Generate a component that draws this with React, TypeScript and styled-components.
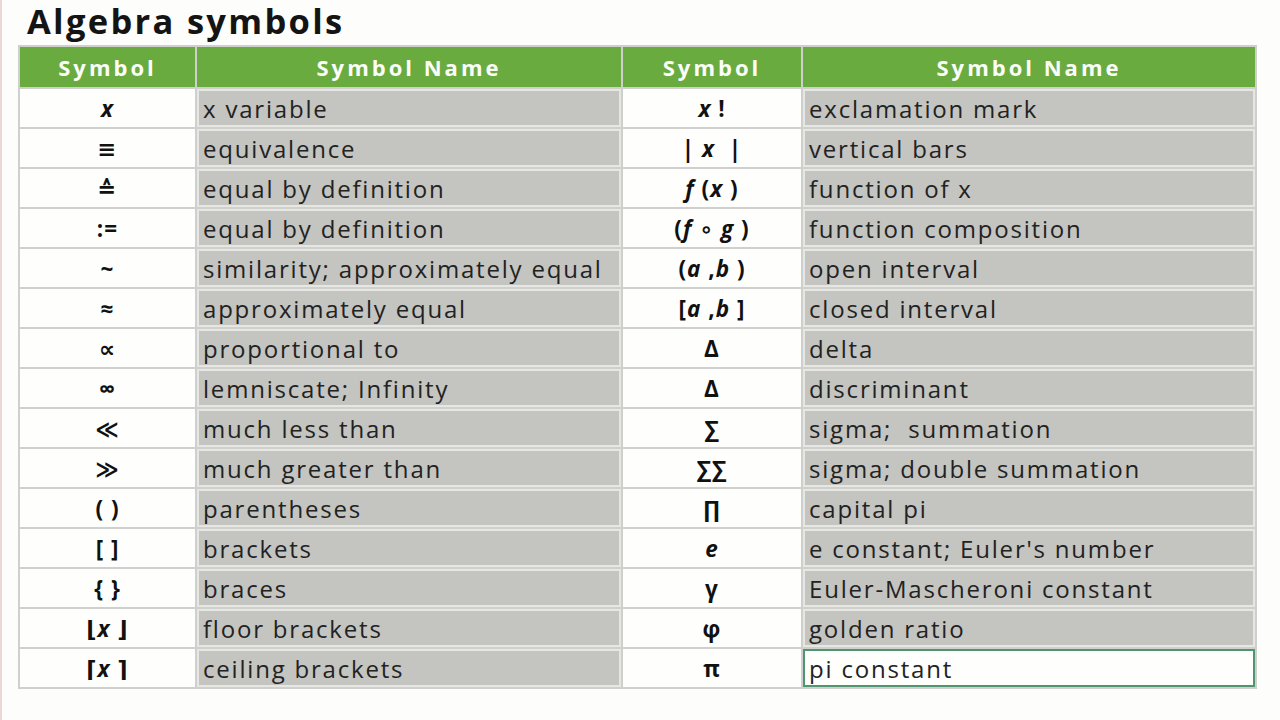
import React from "react";
import styled, { createGlobalStyle } from "styled-components";

const GlobalStyle = createGlobalStyle`
  html, body {
    margin: 0;
    padding: 0;
    background: #fdfdfb;
  }
  body {
    font-family: "Open Sans", "DejaVu Sans", sans-serif;
  }
`;

const Page = styled.div`
  width: 1280px;
  height: 720px;
  box-sizing: border-box;
  border-left: 2px solid #ecd6d6;
  padding: 0 0 0 16px;
  overflow: hidden;
`;

const Title = styled.h1`
  margin: 0 0 3px 9px;
  font-family: "Open Sans", sans-serif;
  font-size: 34.5px;
  line-height: 42px;
  font-weight: 700;
  letter-spacing: 2.3px;
  color: #141414;
`;

const Table = styled.table`
  border-collapse: collapse;
  table-layout: fixed;
  border: 2px solid #cfcfcd;
`;

const HeadCell = styled.th<{ $w: number }>`
  width: ${(p) => p.$w}px;
  height: 40px;
  padding: 0;
  background: #6aab40;
  color: #fbfdf8;
  font-size: 22px;
  font-weight: 700;
  letter-spacing: 3px;
  text-align: center;
  border: 2px solid #cfcfcd;
`;

const SymbolCell = styled.td`
  height: 38px;
  padding: 0;
  background: #fefefd;
  color: #111;
  font-size: 22.5px;
  font-weight: 700;
  letter-spacing: 1px;
  text-align: center;
  white-space: pre;
  border: 2px solid #cfcfcd;
  font-family: "Open Sans", "DejaVu Sans", sans-serif;
`;

const NameCell = styled.td<{ $selected?: boolean }>`
  height: 38px;
  padding: 0 0 0 6px;
  background: ${(p) => (p.$selected ? "#fefefd" : "#c4c4c1")};
  color: #222;
  font-size: 24px;
  letter-spacing: 1.8px;
  white-space: pre;
  border: 2px solid #cfcfcd;
  box-shadow: ${(p) =>
    p.$selected ? "inset 0 0 0 2px #4f9670" : "inset 0 0 0 2px #e6e6e3"};
`;

const Var = styled.i`
  font-style: italic;
`;

type Row = {
  sym: React.ReactNode;
  name: string;
};

const left: Row[] = [
  { sym: <Var>x</Var>, name: "x variable" },
  { sym: "≡", name: "equivalence" },
  { sym: "≙", name: "equal by definition" },
  { sym: ":=", name: "equal by definition" },
  { sym: "~", name: "similarity; approximately equal" },
  { sym: "≈", name: "approximately equal" },
  { sym: "∝", name: "proportional to" },
  { sym: "∞", name: "lemniscate; Infinity" },
  { sym: "≪", name: "much less than" },
  { sym: "≫", name: "much greater than" },
  { sym: "( )", name: "parentheses" },
  { sym: "[ ]", name: "brackets" },
  { sym: "{ }", name: "braces" },
  { sym: <>⌊<Var>x</Var> ⌋</>, name: "floor brackets" },
  { sym: <>⌈<Var>x</Var> ⌉</>, name: "ceiling brackets" },
];

const right: Row[] = [
  { sym: <><Var>x</Var> !</>, name: "exclamation mark" },
  { sym: <>| <Var>x</Var>  |</>, name: "vertical bars" },
  { sym: <><Var>f</Var> (<Var>x</Var> )</>, name: "function of x" },
  { sym: <>(<Var>f</Var> ∘ <Var>g</Var> )</>, name: "function composition" },
  { sym: <>(<Var>a</Var> ,<Var>b</Var> )</>, name: "open interval" },
  { sym: <>[<Var>a</Var> ,<Var>b</Var> ]</>, name: "closed interval" },
  { sym: "Δ", name: "delta" },
  { sym: "Δ", name: "discriminant" },
  { sym: "∑", name: "sigma;  summation" },
  { sym: "∑∑", name: "sigma; double summation" },
  { sym: "∏", name: "capital pi" },
  { sym: <Var>e</Var>, name: "e constant; Euler's number" },
  { sym: "γ", name: "Euler-Mascheroni constant" },
  { sym: "φ", name: "golden ratio" },
  { sym: "π", name: "pi constant" },
];

export default function App() {
  return (
    <>
      <GlobalStyle />
      <Page>
        <Title>Algebra symbols</Title>
        <Table>
          <thead>
            <tr>
              <HeadCell $w={175}>Symbol</HeadCell>
              <HeadCell $w={424}>Symbol Name</HeadCell>
              <HeadCell $w={178}>Symbol</HeadCell>
              <HeadCell $w={452}>Symbol Name</HeadCell>
            </tr>
          </thead>
          <tbody>
            {left.map((row, i) => (
              <tr key={i}>
                <SymbolCell>{row.sym}</SymbolCell>
                <NameCell>{row.name}</NameCell>
                <SymbolCell>{right[i].sym}</SymbolCell>
                <NameCell $selected={i === right.length - 1}>
                  {right[i].name}
                </NameCell>
              </tr>
            ))}
          </tbody>
        </Table>
      </Page>
    </>
  );
}
